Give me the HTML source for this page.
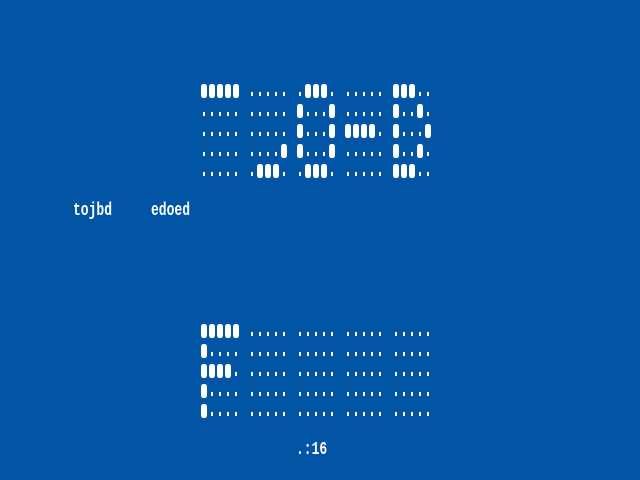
<!DOCTYPE html>
<html><head><meta charset="utf-8"><style>
html,body{margin:0;padding:0}
body{width:640px;height:480px;background:#0254a4;position:relative;overflow:hidden;color:#fff}
.b{position:absolute;width:6px;height:14px;background:#fff;border-radius:2px/3px}
.d{position:absolute;width:2px;height:4px;background:#fff}
.t{position:absolute;font-family:"Liberation Mono","DejaVu Sans Mono",monospace;font-size:13px;font-weight:bold;line-height:13px;transform:scaleY(1.4);transform-origin:0 0;white-space:pre}
</style></head><body>
<div class="t" style="left:73px;top:201px">tojbd</div>
<div class="t" style="left:151px;top:201px">edoed</div>
<div class="t" style="left:296px;top:440px">.:16</div>
<div id="g"></div>
<script>
var top1=["11111 00000 01110 00000 11100","00000 00000 10001 00000 10010","00000 00000 10001 11110 10001","00000 00001 10001 00000 10010","00000 01110 01110 00000 11100"];
var bot=["11111 00000 00000 00000 00000","10000 00000 00000 00000 00000","11110 00000 00000 00000 00000","10000 00000 00000 00000 00000","10000 00000 00000 00000 00000"];
var h="";
function draw(p,y0){p.forEach(function(r,ri){var gs=r.split(" ");gs.forEach(function(g,gi){for(var c=0;c<5;c++){var x=201+gi*48+c*8,y=y0+ri*20;
if(g[c]=="1")h+='<div class="b" style="left:'+x+'px;top:'+y+'px"></div>';
else h+='<div class="d" style="left:'+(x+2)+'px;top:'+(y+8)+'px"></div>';}});});}
draw(top1,84);draw(bot,324);
document.getElementById("g").innerHTML=h;
</script>
</body></html>
